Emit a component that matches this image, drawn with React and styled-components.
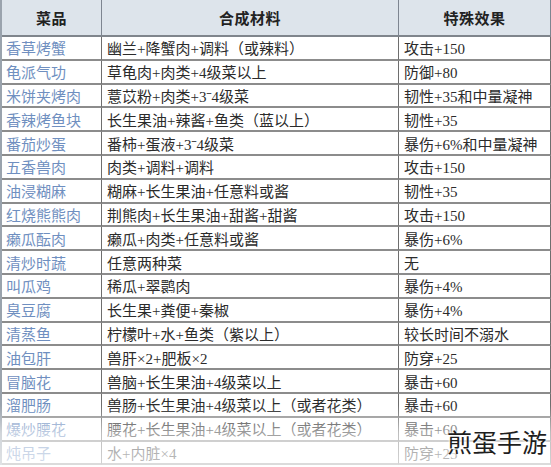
import React from 'react';
import styled, { createGlobalStyle } from 'styled-components';

const GlobalStyle = createGlobalStyle`
  html, body {
    margin: 0;
    padding: 0;
    background: #ffffff;
  }
  body {
    font-family: "Liberation Serif", "Noto Sans CJK SC", serif;
  }
`;

const Page = styled.div`
  position: relative;
  width: 551px;
  height: 467px;
  overflow: hidden;
  background: #fff;
`;

const Table = styled.div`
  width: 549px;
  display: grid;
  grid-template-columns: 100px 297px 152px;
  grid-template-rows: 37px;
  grid-auto-rows: 23.8px;
  border-left: 2px solid #9aa3ad;
  box-sizing: border-box;
`;

const HeadCell = styled.div`
  display: flex;
  align-items: center;
  justify-content: center;
  background: #dde4eb;
  color: #222;
  font-weight: bold;
  font-size: 15px;
  letter-spacing: 0.5px;
  border-right: 1px solid #7d8590;
  border-bottom: 2px solid #7f858c;
  box-sizing: border-box;
`;

const Cell = styled.div`
  display: flex;
  align-items: center;
  padding-left: ${p => (p.$name ? '4px' : '5px')};
  color: ${p => (p.$name ? '#6f8fc0' : '#2b2b2b')};
  font-size: 15px;
  white-space: nowrap;
  overflow: hidden;
  border-right: 1px solid #6e6e6e;
  border-bottom: 2px solid #8c8c8c;
  box-sizing: border-box;
`;

const Fade = styled.div`
  position: absolute;
  left: 0;
  right: 0;
  bottom: 0;
  height: 62px;
  background: linear-gradient(to bottom, rgba(255,255,255,0) 0%, rgba(255,255,255,0.55) 45%, rgba(255,255,255,0.7) 100%);
  pointer-events: none;
`;

const Watermark = styled.div`
  position: absolute;
  right: 4px;
  bottom: 8px;
  font-family: "Noto Sans CJK SC", sans-serif;
  font-size: 25px;
  color: #1e1e1e;
  letter-spacing: 0px;
  text-shadow: 0 0 3px #fff, 0 0 3px #fff;
`;

const rows = [
  ['香草烤蟹', '幽兰+降蟹肉+调料（或辣料）', '攻击+150'],
  ['龟派气功', '草龟肉+肉类+4级菜以上', '防御+80'],
  ['米饼夹烤肉', '薏苡粉+肉类+3ˉ4级菜', '韧性+35和中量凝神'],
  ['香辣烤鱼块', '长生果油+辣酱+鱼类（蓝以上）', '韧性+35'],
  ['番茄炒蛋', '番柿+蛋液+3ˉ4级菜', '暴伤+6%和中量凝神'],
  ['五香兽肉', '肉类+调料+调料', '攻击+150'],
  ['油浸糊麻', '糊麻+长生果油+任意料或酱', '韧性+35'],
  ['红烧熊熊肉', '荆熊肉+长生果油+甜酱+甜酱', '攻击+150'],
  ['癞瓜酝肉', '癞瓜+肉类+任意料或酱', '暴伤+6%'],
  ['清炒时蔬', '任意两种菜', '无'],
  ['叫瓜鸡', '稀瓜+翠鹮肉', '暴伤+4%'],
  ['臭豆腐', '长生果+粪便+秦椒', '暴伤+4%'],
  ['清蒸鱼', '柠檬叶+水+鱼类（紫以上）', '较长时间不溺水'],
  ['油包肝', '兽肝×2+肥板×2', '防穿+25'],
  ['冒脑花', '兽脑+长生果油+4级菜以上', '暴击+60'],
  ['溜肥肠', '兽肠+长生果油+4级菜以上（或者花类）', '暴击+60'],
  ['爆炒腰花', '腰花+长生果油+4级菜以上（或者花类）', '暴击+60'],
  ['炖吊子', '水+内脏×4', '防穿+25'],
];

export default function App() {
  return (
    <Page>
      <GlobalStyle />
      <Table>
        <HeadCell>菜品</HeadCell>
        <HeadCell>合成材料</HeadCell>
        <HeadCell>特殊效果</HeadCell>
        {rows.map(r => (
          <React.Fragment key={r[0]}>
            <Cell $name>{r[0]}</Cell>
            <Cell>{r[1]}</Cell>
            <Cell>{r[2]}</Cell>
          </React.Fragment>
        ))}
      </Table>
      <Fade />
      <Watermark>煎蛋手游</Watermark>
    </Page>
  );
}
